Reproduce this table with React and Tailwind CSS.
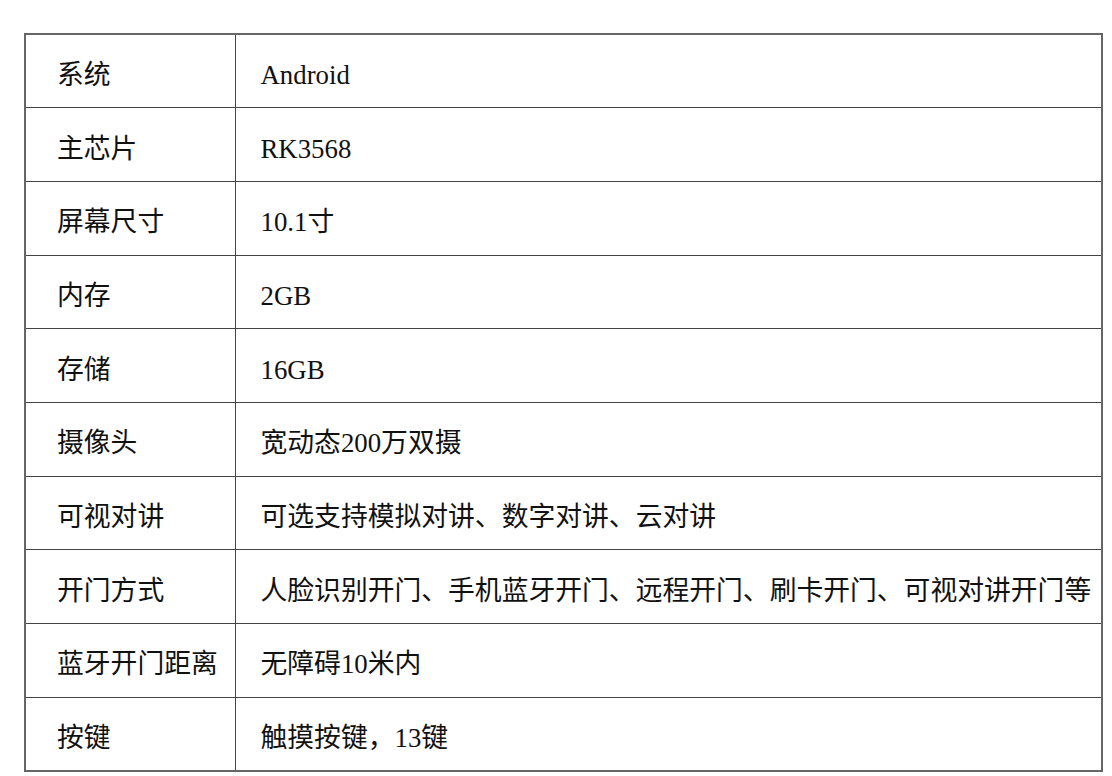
import React from 'react'

const rows = [
  ['系统', 'Android'],
  ['主芯片', 'RK3568'],
  ['屏幕尺寸', '10.1寸'],
  ['内存', '2GB'],
  ['存储', '16GB'],
  ['摄像头', '宽动态200万双摄'],
  ['可视对讲', '可选支持模拟对讲、数字对讲、云对讲'],
  ['开门方式', '人脸识别开门、手机蓝牙开门、远程开门、刷卡开门、可视对讲开门等'],
  ['蓝牙开门距离', '无障碍10米内'],
  ['按键', '触摸按键，13键'],
]

export default function App() {
  return (
    <div
      className="w-[1112px] h-[776px] bg-white pt-[33px] pl-[24px] text-[#111]"
      style={{ fontFamily: '"Liberation Serif", "Noto Sans CJK SC", serif' }}
    >
      <table className="w-[1079px] border-collapse border-2 border-[#666] text-[26.8px]">
        <tbody>
          {rows.map(([k, v]) => (
            <tr key={k} className="h-[73.7px]">
              <td className="w-[210px] border border-[#444] pl-[31px] pt-[9px] align-middle whitespace-nowrap leading-none">
                {k}
              </td>
              <td className="border border-[#444] pl-[25px] pt-[9px] align-middle whitespace-nowrap leading-none">
                {v}
              </td>
            </tr>
          ))}
        </tbody>
      </table>
    </div>
  )
}
